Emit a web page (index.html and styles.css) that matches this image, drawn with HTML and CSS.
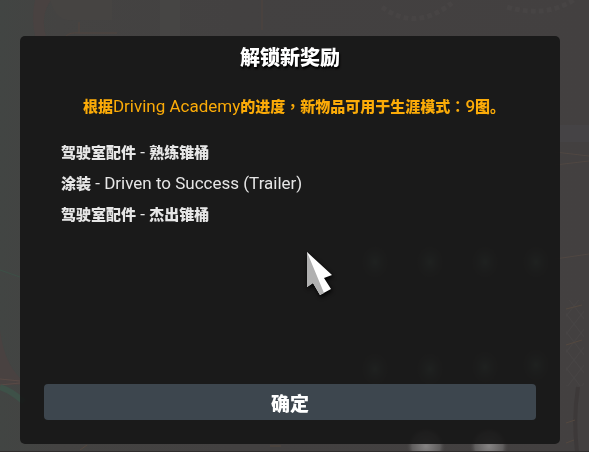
FILE: index.html
```html
<!DOCTYPE html>
<html lang="zh-CN">
<head>
  <meta charset="UTF-8">
  <meta name="viewport" content="width=device-width, initial-scale=1">
  <title>解锁新奖励</title>
  <link rel="stylesheet" href="styles.css">
</head>
<body>

  <!-- Dimmed garage scene -->
  <svg class="scene" viewBox="0 0 589 452" preserveAspectRatio="xMidYMid slice" aria-hidden="true">
    <defs>
      <linearGradient id="wall" x1="0" x2="1">
        <stop offset="0" stop-color="#424543"/>
        <stop offset="0.1" stop-color="#444342"/>
        <stop offset="0.4" stop-color="#434141"/>
        <stop offset="1" stop-color="#434040"/>
      </linearGradient>
      <radialGradient id="lamp">
        <stop offset="0" stop-color="#6a7c72"/>
        <stop offset="1" stop-color="#434141" stop-opacity="0"/>
      </radialGradient>
      <radialGradient id="lampBright">
        <stop offset="0" stop-color="#858383"/>
        <stop offset="0.7" stop-color="#605e5e"/>
        <stop offset="1" stop-color="#434141" stop-opacity="0"/>
      </radialGradient>
      <pattern id="mesh" width="14" height="18" patternUnits="userSpaceOnUse">
        <path d="M0 0L14 18M14 0L0 18" fill="none" stroke="#474444"/>
      </pattern>
    </defs>
    <rect width="589" height="452" fill="url(#wall)"/>
    <path d="M35 0Q31 18 35 36H46Q40 16 51 0Z" fill="#494241"/>
    <path d="M50 0Q56 22 72 20H112V0Z" fill="#464442"/>
    <path d="M160 0h20v36h-20z" fill="#464544"/>
    <path d="M66 36Q70 32 79 33H117M79 22v11M262 0v30" fill="none" stroke="#51443e"/>
    <path d="M382 7Q415 32 452 3M507 7Q545 18 574 0" fill="none" stroke="#474444" stroke-width="5" stroke-dasharray="5 3"/>
    <path d="M560 125h29v17h-29z" fill="#454345"/>
    <path d="M555 152L589 156M555 165L589 161M555 259L589 254" fill="none" stroke="#504742"/>
    <path d="M0 270L20 277" stroke="#3d5047"/>
    <path d="M0 330Q4 362 20 378V385H0Z" fill="#494241"/>
    <path d="M0 379L20 381M0 385L20 383" stroke="#5a4a46"/>
    <path d="M0 387Q12 391 24 402" fill="none" stroke="#3e5148" stroke-width="6"/>
    <rect x="566" y="300" width="18" height="86" fill="url(#mesh)"/>
    <path d="M578 387Q573 418 577 452" fill="none" stroke="#3d3939" stroke-width="4"/>
    <path d="M566 309l16-4M566 345l16-5M566 423l9-3M566 443l8-3M80 450l7-5M270 446h11" stroke="#54483f"/>
    <g fill="url(#lamp)">
      <ellipse cx="375" cy="262" rx="19" ry="23"/>
      <ellipse cx="430" cy="262" rx="19" ry="23"/>
      <ellipse cx="485" cy="262" rx="19" ry="23"/>
      <ellipse cx="536" cy="262" rx="19" ry="23"/>
      <ellipse cx="375" cy="369" rx="19" ry="23"/>
      <ellipse cx="430" cy="369" rx="19" ry="23"/>
      <ellipse cx="485" cy="367" rx="19" ry="23"/>
      <ellipse cx="536" cy="365" rx="19" ry="23"/>
    </g>
    <ellipse cx="426" cy="446" rx="20" ry="20" fill="url(#lampBright)"/>
    <ellipse cx="489" cy="446" rx="20" ry="20" fill="url(#lampBright)"/>
    <path d="M0 451h589v1H0z" fill="#302d2d"/>
  </svg>

  <main class="dialog" role="dialog" aria-labelledby="title">
    <h1 class="title" id="title">解锁新奖励</h1>
    <p class="notice"><b>根据</b>Driving Academy<b>的进度<span class="mark" lang="zh-TW">，</span>新物品可用于生涯模式<span class="mark" lang="zh-TW">：</span></b><span class="count">9</span><b>图。</b></p>
    <ul class="rewards">
      <li><b>驾驶室配件</b> - <b>熟练锥桶</b></li>
      <li><b>涂装</b> - Driven to Success (Trailer)</li>
      <li><b>驾驶室配件</b> - <b>杰出锥桶</b></li>
    </ul>
    <button class="confirm" type="button">确定</button>
  </main>

  <svg class="cursor" viewBox="0 0 32 48" aria-hidden="true">
    <path d="M3 2L28 25L20 28L27 39L16 45L9 33L3 37Z" fill="#fff"/>
    <path d="M3 2L20 43L16 45L9 33L3 37Z" fill="#b0b0b0"/>
  </svg>

</body>
</html>
```
FILE: styles.css
```css
* {
  box-sizing: border-box;
}

body {
  display: flex;
  min-height: 100vh;
  margin: 0;
  padding: 36px 29px 8px 20px;
  background: #434141;
  color: #e6e6e6;
  font-family: Roboto, "Noto Sans CJK SC", sans-serif;
  font-size: 17px;
  line-height: 31px;
}

.scene {
  position: fixed;
  inset: 0;
  width: 100%;
  height: 100%;
}

.dialog {
  position: relative;
  display: flex;
  flex: 1;
  flex-direction: column;
  padding: 7px 24px 24px;
  background: rgba(20, 21, 21, 0.88);
  border-radius: 5px;
}

.title {
  margin: 0;
  color: #fff;
  font-size: 20px;
  font-weight: 900;
  line-height: 30px;
  text-align: center;
  text-shadow: 1px 2px 2px #000;
}

.notice {
  margin: 18px 0 15px;
  padding-left: 8px;
  color: #fbab08;
  text-align: center;
}

b {
  font-size: 15px;
  font-weight: 900;
  line-height: 1;
}

.mark {
  font-family: "Noto Sans CJK TC", sans-serif;
  font-weight: 700;
}

.count {
  font-weight: 500;
}

.rewards {
  margin: 0;
  padding: 0 17px;
  list-style: none;
}

.confirm {
  height: 36px;
  margin-top: auto;
  padding: 0;
  background: #3d464e;
  border: none;
  border-radius: 4px;
  color: #fff;
  font-family: inherit;
  font-size: 19px;
  font-weight: 900;
  cursor: pointer;
}

.confirm:hover {
  background: #4a555e;
}

.cursor {
  position: absolute;
  top: 250px;
  left: 304px;
  width: 32px;
  height: 48px;
  filter: drop-shadow(1px 2px 2px #000);
  pointer-events: none;
}
```
